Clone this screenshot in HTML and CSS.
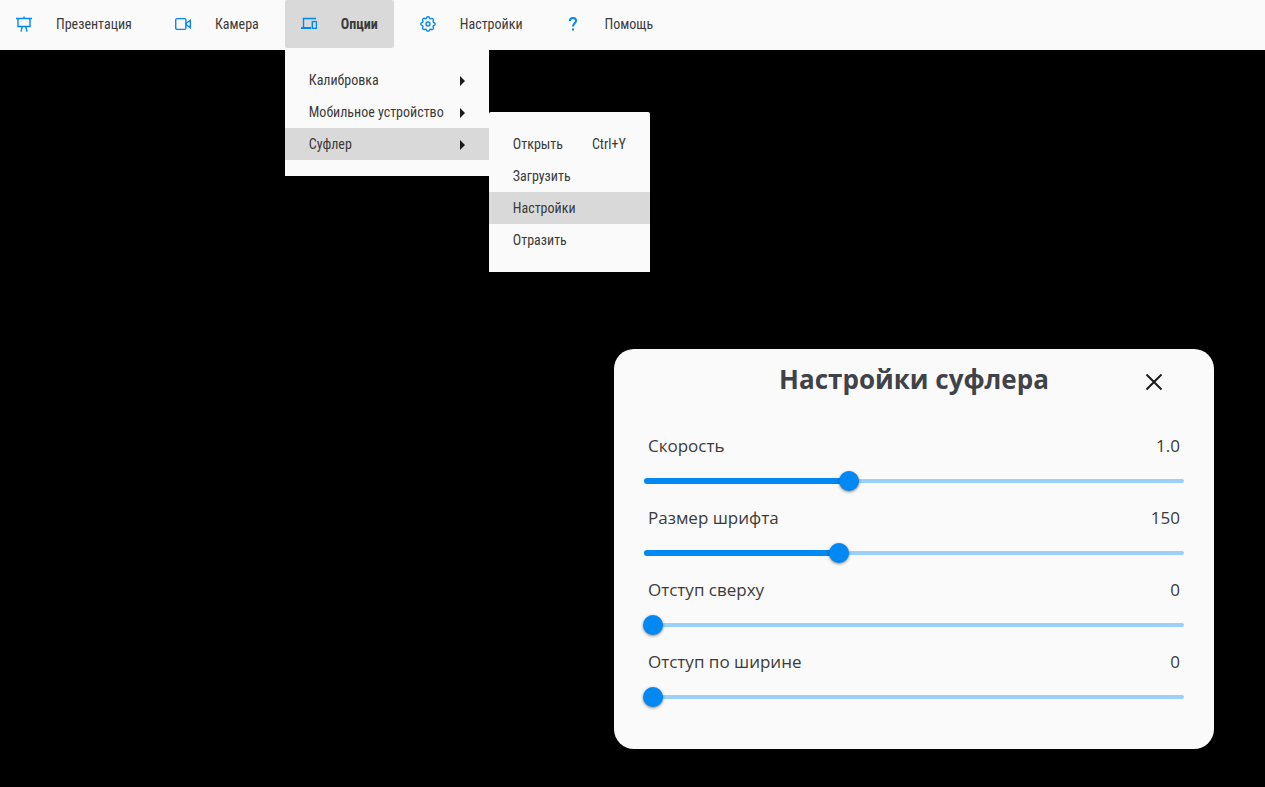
FILE: index.html
```html
<!DOCTYPE html>
<html lang="ru">
<head>
<meta charset="utf-8">
<meta name="viewport" content="width=device-width, initial-scale=1">
<title>Настройки суфлера</title>
<link rel="stylesheet" href="styles.css">
</head>
<body>
<nav class="menubar">
  <ul class="menubar-list">
    <li class="menubar-item">
      <button class="menubar-button" type="button">
        <svg class="icon" viewBox="0 0 16 16" aria-hidden="true"><path d="M0 2.500h16M8 0.500v2M2 3v7.500h12V3M6.300 10.500L5 15.700M9.700 10.500l1.300 5.200"/></svg>
        <span>Презентация</span>
      </button>
    </li>
    <li class="menubar-item">
      <button class="menubar-button" type="button">
        <svg class="icon" viewBox="0 0 16 16" aria-hidden="true"><rect x="0.700" y="2.600" width="10.200" height="10.800" rx="1.400"/><path d="M15.300 4.300v7.400L11.400 9V7z"/></svg>
        <span>Камера</span>
      </button>
    </li>
    <li class="menubar-item">
      <button class="menubar-button active" type="button" aria-expanded="true">
        <svg class="icon" viewBox="0 0 16 16" aria-hidden="true"><path d="M15 2.500H2.500v9"/><path stroke-width="2" d="M0 12h10"/><rect x="11.300" y="5.600" width="4.200" height="6.700"/></svg>
        <span>Опции</span>
      </button>
      <ul class="menu">
        <li><button class="menu-button" type="button">Калибровка<span class="arrow"></span></button></li>
        <li><button class="menu-button" type="button">Мобильное устройство<span class="arrow"></span></button></li>
        <li class="menu-parent">
          <button class="menu-button active" type="button" aria-expanded="true">Суфлер<span class="arrow"></span></button>
          <ul class="menu submenu">
            <li><button class="menu-button" type="button">Открыть<kbd class="shortcut">Ctrl+Y</kbd></button></li>
            <li><button class="menu-button" type="button">Загрузить</button></li>
            <li><button class="menu-button active" type="button">Настройки</button></li>
            <li><button class="menu-button" type="button">Отразить</button></li>
          </ul>
        </li>
      </ul>
    </li>
    <li class="menubar-item">
      <button class="menubar-button" type="button">
        <svg class="icon" viewBox="0 0 16 16" aria-hidden="true"><path stroke-linejoin="round" d="M6.200 2.600Q6.600.8 8 .8t1.800 1.800l.7.3q1.500-1 2.500 0t0 2.600l.4.700q1.800.4 1.800 1.800t-1.800 1.800l-.4.700q1 1.500 0 2.600t-2.500 0l-.7.300Q9.400 15.200 8 15.200t-1.800-1.800l-.7-.3q-1.500 1-2.500 0t0-2.600l-.4-.7Q.8 9.400.8 8t1.800-1.800l.4-.7q-1-1.500 0-2.600t2.500 0z"/><circle cx="8" cy="8" r="2"/></svg>
        <span>Настройки</span>
      </button>
    </li>
    <li class="menubar-item">
      <button class="menubar-button" type="button">
        <svg class="icon icon-help" viewBox="0 0 16 16" aria-hidden="true"><path d="M4.900 5C4.900 2.900 6.200 1.900 8 1.900s3.100 1 3.100 2.800C11.100 6.900 8 7.200 8 10.500M8 12.600v2"/></svg>
        <span>Помощь</span>
      </button>
    </li>
  </ul>
</nav>
<main class="stage">
  <section class="dialog" role="dialog" aria-labelledby="dialog-title">
    <header class="dialog-header">
      <h1 class="dialog-title" id="dialog-title">Настройки суфлера</h1>
      <button class="close" type="button" aria-label="Закрыть">
        <svg class="close-icon" viewBox="0 0 18 18" aria-hidden="true"><path d="M1.500 1.500l15 15M16.500 1.500l-15 15"/></svg>
      </button>
    </header>
    <div class="setting">
      <div class="setting-text"><label for="speed">Скорость</label><output for="speed">1.0</output></div>
      <div class="slider" style="--fill: 37.5%"><input id="speed" type="range" min="0.25" max="2.25" step="0.05" value="1"></div>
    </div>
    <div class="setting">
      <div class="setting-text"><label for="size">Размер шрифта</label><output for="size">150</output></div>
      <div class="slider" style="--fill: 35.7%"><input id="size" type="range" min="50" max="330" value="150"></div>
    </div>
    <div class="setting">
      <div class="setting-text"><label for="top">Отступ сверху</label><output for="top">0</output></div>
      <div class="slider" style="--fill: 0%"><input id="top" type="range" min="0" max="100" value="0"></div>
    </div>
    <div class="setting">
      <div class="setting-text"><label for="side">Отступ по ширине</label><output for="side">0</output></div>
      <div class="slider" style="--fill: 0%"><input id="side" type="range" min="0" max="100" value="0"></div>
    </div>
  </section>
</main>
</body>
</html>
```
FILE: styles.css
```css
* {
  box-sizing: border-box;
}

body {
  margin: 0;
  min-height: 100vh;
  display: flex;
  flex-direction: column;
  background: #000;
  color: #3a3a3a;
  font-family: "Open Sans", "Noto Sans", sans-serif;
}

button {
  margin: 0;
  border: 0;
  background: none;
  color: inherit;
  font: inherit;
  cursor: pointer;
}

/* Menu bar */

.menubar {
  background: #fafafa;
  padding-bottom: 2px;
  font: 14px/16px "Roboto Condensed", Roboto, sans-serif;
}

.menubar-list,
.menu {
  margin: 0;
  padding: 0;
  list-style: none;
}

.menubar-list {
  display: flex;
  gap: 10px;
}

.menubar-item,
.menu-parent {
  position: relative;
}

.menubar-item:first-child {
  min-width: 149px;
}

.menubar-button {
  display: flex;
  align-items: center;
  gap: 24px;
  height: 48px;
  padding: 0 16px;
  border-radius: 2px;
}

.active {
  background: #d9d9d9;
}

.menubar-button.active {
  font-weight: 700;
}

.icon {
  width: 16px;
  height: 16px;
  fill: none;
  stroke: #0288f2;
  stroke-width: 1.4;
}

.icon-help {
  stroke-width: 2;
}

.menu {
  position: absolute;
  z-index: 2;
  top: 100%;
  left: 0;
  min-width: 204px;
  padding: 16px 0;
  border-radius: 2px 2px 0 0;
  background: #fafafa;
}

.submenu {
  top: -16px;
  left: 100%;
  min-width: 161px;
}

.menu-button {
  display: flex;
  align-items: center;
  justify-content: space-between;
  gap: 16px;
  width: 100%;
  height: 32px;
  padding: 0 24px;
  white-space: nowrap;
}

.shortcut {
  font: inherit;
}

.arrow {
  margin-top: 2px;
  border: 5px solid transparent;
  border-left-color: #1a1a1a;
  border-right-width: 0;
}

/* Dialog */

.stage {
  flex: 1;
  display: flex;
  justify-content: flex-end;
  align-items: flex-end;
  padding: 38px 51px;
}

.dialog {
  width: 100%;
  max-width: 600px;
  padding: 8px 29px 40px;
  border-radius: 20px;
  background: #fafafa;
}

.dialog-header {
  display: grid;
  grid-template-columns: 48px 1fr 48px;
  min-height: 50px;
  margin-bottom: 14px;
}

.dialog-title {
  grid-column: 2;
  margin: 0;
  color: #40424a;
  font-size: 26px;
  line-height: 44px;
  text-align: center;
}

.close {
  display: grid;
  padding: 8px;
  place-self: center start;
}

.close-icon {
  width: 18px;
  height: 18px;
  fill: none;
  stroke: #1a1a1a;
  stroke-width: 2;
}

.setting {
  height: 72px;
}

.setting-text {
  display: flex;
  justify-content: space-between;
  padding: 0 5px;
  font-size: 17px;
  line-height: 50px;
}

.slider {
  display: grid;
  align-items: center;
}

.slider::before,
.slider::after,
.slider input {
  grid-area: 1 / 1;
}

.slider::before,
.slider::after {
  content: "";
  height: 4px;
  margin: 0 1px;
  border-radius: 3px;
  background: #9bd0f8;
}

.slider::after {
  width: var(--fill);
  height: 6px;
  background: #0288f2;
}

.slider input {
  z-index: 1;
  width: 100%;
  height: 20px;
  margin: 0;
  background: none;
  appearance: none;
}

.slider input::-webkit-slider-thumb {
  appearance: none;
  width: 20px;
  height: 20px;
  border-radius: 50%;
  background: #0288f2;
  box-shadow: 0 1px 3px rgba(0, 0, 0, 0.5);
}

.slider input::-moz-range-thumb {
  width: 20px;
  height: 20px;
  border: 0;
  border-radius: 50%;
  background: #0288f2;
}
```
